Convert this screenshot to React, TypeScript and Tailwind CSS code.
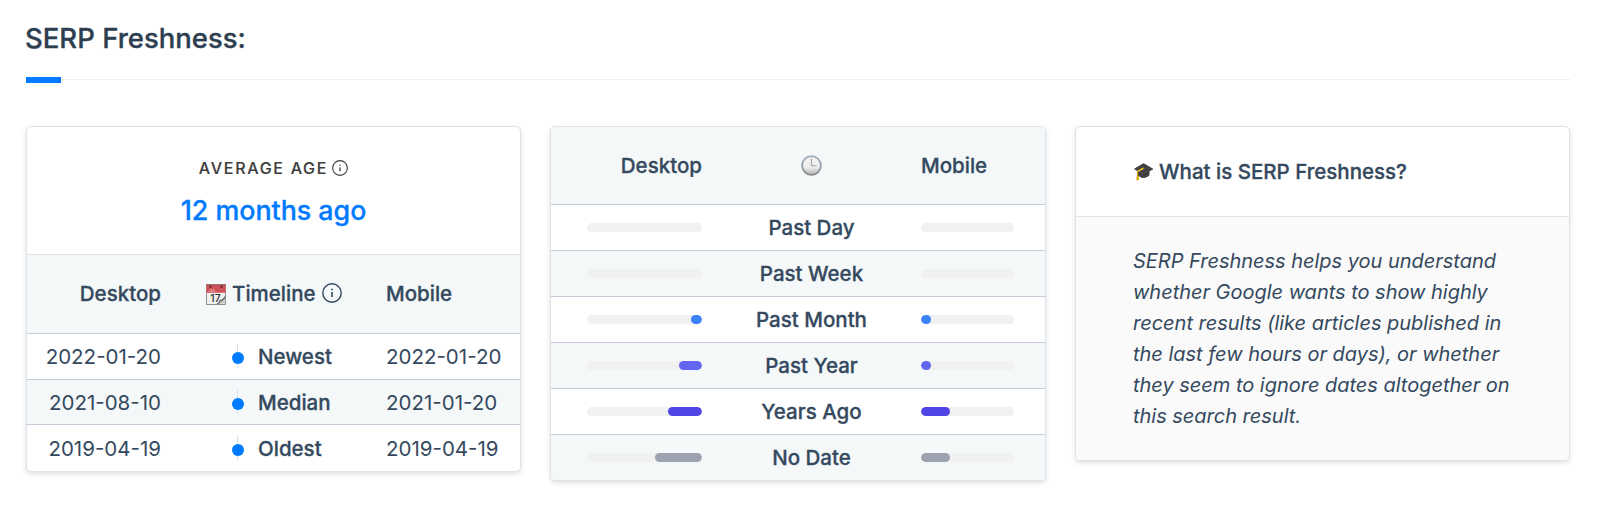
const timeline = [
  { label: 'Newest', desktop: '2022-01-20', mobile: '2022-01-20' },
  { label: 'Median', desktop: '2021-08-10', mobile: '2021-01-20' },
  { label: 'Oldest', desktop: '2019-04-19', mobile: '2019-04-19' },
];

const buckets = [
  { label: 'Past Day', desktop: 0, mobile: 0, color: 'bg-blue-500' },
  { label: 'Past Week', desktop: 0, mobile: 0, color: 'bg-blue-500' },
  { label: 'Past Month', desktop: 10, mobile: 10.5, color: 'bg-[#3b82f6]' },
  { label: 'Past Year', desktop: 20, mobile: 10.5, color: 'bg-[#6366f1]' },
  { label: 'Years Ago', desktop: 30, mobile: 31, color: 'bg-[#4f46e5]' },
  { label: 'No Date', desktop: 41, mobile: 31, color: 'bg-[#9ca3af]' },
];

const cardClass =
  'overflow-hidden rounded-[5px] border border-[#dae4e9] bg-white shadow-[0_2px_5px_rgba(0,0,0,0.12)]';

// slightly heavier than medium, lighter than semibold
const strongClass = 'font-medium [-webkit-text-stroke:0.3px_currentColor]';

function InfoIcon({ className }: { className: string }) {
  return (
    <svg viewBox="0 0 20 20" fill="none" stroke="currentColor" className={className}>
      <circle cx="10" cy="10" r="9.2" strokeWidth="1.4" />
      <path d="M10 9v5" strokeWidth="1.6" />
      <circle cx="10" cy="6.5" r="0.9" fill="currentColor" stroke="none" />
    </svg>
  );
}

function CalendarIcon() {
  return (
    <svg viewBox="0 0 20 21" className="h-[21px] w-5 shrink-0 [-webkit-text-stroke:0]">
      <rect x="0.5" y="0.8" width="19" height="19.7" fill="#f2f1ee" stroke="#77777a" strokeWidth="0.8" />
      <path d="M0.4 0.8h19.2v8H0.4z" fill="#cf5359" />
      <path d="M0.4 0.8h19.2" stroke="#8d4a4e" strokeWidth="0.8" />
      <circle cx="4.5" cy="2.8" r="1.1" fill="#4b2326" />
      <circle cx="15.5" cy="2.8" r="1.1" fill="#4b2326" />
      <text x="2.5" y="8.2" fontSize="4" fill="#f3c4c6" fontFamily="Inter, sans-serif">
        JUL
      </text>
      <text x="4.3" y="17.6" fontSize="10.5" fill="#2e2e30" fontFamily="Inter, sans-serif">
        17
      </text>
      <path d="M11 20.1 19.2 12.5V20.1z" fill="#d5d5d2" />
      <path d="M11 20c3-.8 2.6-2.4 3-3.6 1.8 0 3.8-1.4 5.2-3.9" fill="none" stroke="#55565a" strokeWidth="1.1" />
      <path d="M12 20c2.5-1.5 5-3.2 7-5.5" fill="none" stroke="#77787b" strokeWidth="0.8" />
    </svg>
  );
}

function ClockIcon() {
  return (
    <svg viewBox="0 0 21 21" className="size-[21px]">
      <defs>
        <linearGradient id="clock-rim" x1="0" y1="0" x2="0" y2="1">
          <stop offset="0" stopColor="#9fb0c2" />
          <stop offset="1" stopColor="#858585" />
        </linearGradient>
        <linearGradient id="clock-face" x1="0" y1="0" x2="0" y2="1">
          <stop offset="0" stopColor="#f4f4f4" />
          <stop offset="0.6" stopColor="#ececec" />
          <stop offset="1" stopColor="#b0b0b0" />
        </linearGradient>
      </defs>
      <circle cx="10.5" cy="10.5" r="9.4" fill="url(#clock-face)" stroke="url(#clock-rim)" strokeWidth="1.7" />
      <path d="M10.5 3.5v7.3h5" fill="none" stroke="#a3a3a3" strokeWidth="1.1" />
    </svg>
  );
}

function AverageAge() {
  return (
    <div className={cardClass}>
      <div className="flex h-[128px] flex-col items-center border-b border-[#dde3e8] pt-[29px]">
        <div className="flex items-center gap-[4px] text-[#3d3d3d]">
          <span className="text-base leading-6 font-medium tracking-[1.7px] [-webkit-text-stroke:0.15px_currentColor]">
            AVERAGE AGE
          </span>
          <InfoIcon className="-mt-px size-4" />
        </div>
        <p className={`mt-[10px] text-[26.8px] leading-10 text-[#007bff] ${strongClass}`}>12 months ago</p>
      </div>
      <div className={`flex h-[79px] items-center border-b border-[#c8cddb] bg-[#f4f8f9] pt-px ${strongClass}`}>
        <span className="w-[134px] text-right">Desktop</span>
        <div className="ml-[45px] flex w-[180px] items-center">
          <CalendarIcon />
          <span className="ml-[6px]">Timeline</span>
          <InfoIcon className="-mt-[3px] ml-[6px] size-5" />
        </div>
        <span>Mobile</span>
      </div>
      {timeline.map((row) => (
        <div
          key={row.label}
          className="flex h-[45.7px] items-center border-b border-[#c8cddb] pt-[2px] last:h-[46px] last:border-b-0 nth-4:bg-[#f4f8f9]"
        >
          <span className="w-[134px] text-right">{row.desktop}</span>
          <div className={`ml-[71px] flex w-[154px] items-center ${strongClass}`}>
            <span className="relative flex h-6 w-[12px] items-center justify-center">
              <span className="absolute -top-px left-[5px] h-6 w-px bg-[#d3dee6]" />
              <span className="relative top-px size-[12px] rounded-full bg-[#007bff]" />
            </span>
            <span className="ml-[14px]">{row.label}</span>
          </div>
          <span>{row.mobile}</span>
        </div>
      ))}
    </div>
  );
}

function Distribution() {
  return (
    <div className={cardClass}>
      <div className={`flex h-[77px] items-center bg-[#f4f8f9] ${strongClass}`}>
        <span className="w-[151px] pt-px text-right">Desktop</span>
        <span className="flex w-[219px] justify-center">
          <ClockIcon />
        </span>
        <span className="pt-px">Mobile</span>
      </div>
      {buckets.map((b) => (
        <div
          key={b.label}
          className="flex h-[46px] items-center border-t border-[#c8cddb] even:bg-white odd:bg-[#f4f8f9]"
        >
          <div className="ml-9 flex h-[9px] w-[115px] justify-end overflow-hidden rounded-full bg-[#f1f1f1]">
            <div className={`rounded-full ${b.color}`} style={{ width: `${b.desktop}%` }} />
          </div>
          <span className={`w-[219px] pt-[2px] text-center ${strongClass}`}>{b.label}</span>
          <div className="flex h-[9px] w-[93px] overflow-hidden rounded-full bg-[#f1f1f1]">
            <div className={`rounded-full ${b.color}`} style={{ width: `${b.mobile}%` }} />
          </div>
        </div>
      ))}
    </div>
  );
}

function Explainer() {
  return (
    <div className={cardClass}>
      <div className={`flex h-[90px] items-center border-b border-[#dde3e8] pl-[57px] ${strongClass}`}>
        <span className="flex w-[26px] text-[17px]">🎓</span>
        <span className="pt-px">What is SERP Freshness?</span>
      </div>
      <p className="h-[243px] bg-[#fafafa] pt-[29px] pl-[57px] text-[20px] leading-[30.9px] tracking-[-0.02px] italic">
        SERP Freshness helps you understand
        <br />
        whether Google wants to show highly
        <br />
        recent results (like articles published in
        <br />
        the last few hours or days), or whether
        <br />
        they seem to ignore dates altogether on
        <br />
        this search result.
      </p>
    </div>
  );
}

export default function App() {
  return (
    <main className="min-h-[508px] bg-white px-[26px] pt-[19px] font-['Inter',sans-serif] text-[20.5px] text-[#34495e] antialiased">
      <h2 className={`-ml-px h-[58px] text-[27.5px] leading-[39px] text-[#2c3e50] ${strongClass}`}>SERP Freshness:</h2>
      <div className="flex h-[6px] w-[1544px] items-start">
        <div className="h-[6px] w-[35px] bg-[#007bff]" />
        <div className="mt-[2px] h-px flex-1 bg-[#efefef]" />
      </div>
      <div className="mt-[43px] grid grid-cols-[495px_496px_495px] items-start gap-[29px]">
        <AverageAge />
        <Distribution />
        <Explainer />
      </div>
    </main>
  );
}
